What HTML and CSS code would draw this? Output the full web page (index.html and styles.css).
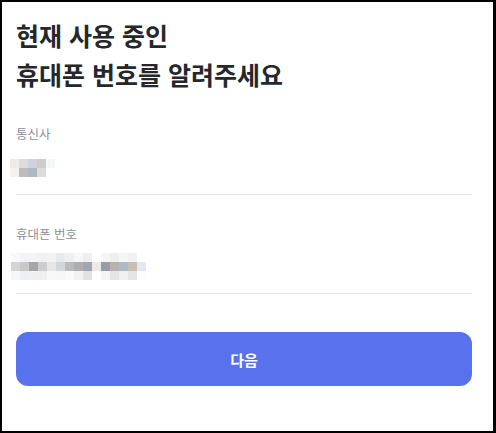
FILE: index.html
```html
<!DOCTYPE html>
<html lang="ko">
<head>
<meta charset="utf-8">
<link rel="stylesheet" href="styles.css">
</head>
<body>
<div class="frame">
  <h1 class="title">현재 사용 중인<br>휴대폰 번호를 알려주세요</h1>
  <div class="field">
    <div class="label">통신사</div>
    <div class="mosaic cols5">
      <span style="background:#eeeae8"></span><span style="background:#dcdcdc"></span><span style="background:#cfd3dc"></span><span style="background:#cccccc"></span><span style="background:#f5f6f8"></span>
      <span style="background:#f2f2f2"></span><span style="background:#bdbdbd"></span><span style="background:#b0b8c0"></span><span style="background:#dcdcdc"></span><span style="background:#ffffff"></span>
    </div>
  </div>
  <div class="field">
    <div class="label">휴대폰 번호</div>
    <div class="mosaic cols15">
      <span style="background:#f8f8f8"></span><span style="background:#f2f3f5"></span><span style="background:#f4f4f4"></span><span style="background:#f0f1f3"></span><span style="background:#f3f3f3"></span><span style="background:#e9eaeb"></span><span style="background:#eeeff0"></span><span style="background:#f7f7f7"></span><span style="background:#efefef"></span><span style="background:#ffffff"></span><span style="background:#f5f5f5"></span><span style="background:#eeeeee"></span><span style="background:#f6f6f6"></span><span style="background:#f1f1f1"></span><span style="background:#ffffff"></span>
      <span style="background:#d4d4d4"></span><span style="background:#c8c8c8"></span><span style="background:#a6a6a8"></span><span style="background:#cdcdd0"></span><span style="background:#e8e6e3"></span><span style="background:#d3d6da"></span><span style="background:#bcbbbb"></span><span style="background:#aeaeb0"></span><span style="background:#a2a6b0"></span><span style="background:#eaeaea"></span><span style="background:#9a9ca4"></span><span style="background:#b8b3b0"></span><span style="background:#aebac4"></span><span style="background:#c5bfb8"></span><span style="background:#e2e8f0"></span>
      <span style="background:#f7f7f7"></span><span style="background:#eeeff1"></span><span style="background:#f1f0ee"></span><span style="background:#eeeff1"></span><span style="background:#f8f8f8"></span><span style="background:#f7f7f7"></span><span style="background:#fafafa"></span><span style="background:#f3f3f3"></span><span style="background:#e2e2e4"></span><span style="background:#ffffff"></span><span style="background:#f4f4f4"></span><span style="background:#e5e5e5"></span><span style="background:#f1f1f1"></span><span style="background:#e5e5e5"></span><span style="background:#fdfdfd"></span>
    </div>
  </div>
  <button class="next" type="button">다음</button>
</div>
</body>
</html>
```

FILE: styles.css
```css
html, body {
  margin: 0;
  padding: 0;
  background: #000;
}
.frame {
  box-sizing: border-box;
  width: 496px;
  height: 433px;
  border-style: solid;
  border-color: #000;
  border-width: 2px 3px 2px 2px;
  background: #fff;
  padding: 14px 21px 0 14px;
  font-family: "Noto Sans CJK KR", "Noto Sans", sans-serif;
}
.title {
  margin: 0;
  font-size: 25px;
  line-height: 39px;
  font-weight: 700;
  color: #25272b;
}
.field {
  border-bottom: 1px solid #e2e2e8;
}
.field:first-of-type {
  margin-top: 31px;
}
.field + .field {
  margin-top: 30px;
}
.label {
  font-size: 12.5px;
  line-height: 18px;
  color: #8a9099;
}
.mosaic {
  display: grid;
  grid-auto-rows: 9px;
  margin: 16px 0 17px -6px;
}
.cols5 { grid-template-columns: repeat(5, 9px); }
.cols15 { grid-template-columns: repeat(15, 9px); margin-left: -5px; margin-top: 10px; margin-bottom: 13px; }
.next {
  display: block;
  width: 100%;
  height: 54px;
  margin-top: 38px;
  border: 0;
  border-radius: 12px;
  background: #5872ee;
  color: #fff;
  font-family: inherit;
  font-size: 15px;
  font-weight: 700;
}
```
